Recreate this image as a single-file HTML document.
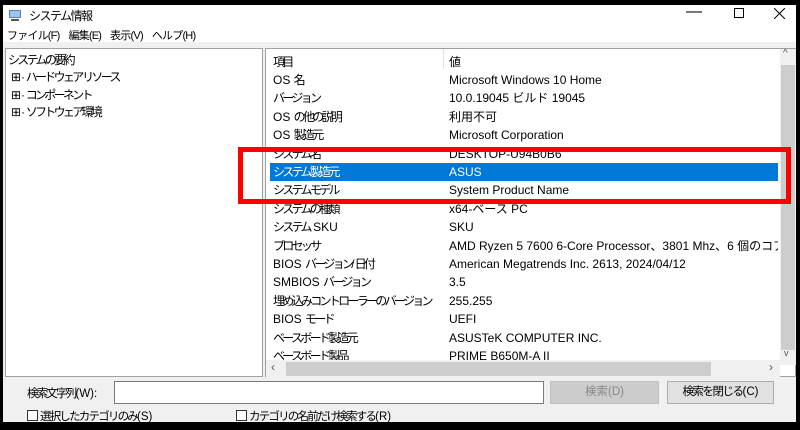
<!DOCTYPE html>
<html><head><meta charset="utf-8"><style>
*{margin:0;padding:0;box-sizing:border-box}
body{width:800px;height:430px;background:#000;position:relative;overflow:hidden;font-family:"Liberation Sans","Noto Sans CJK JP",sans-serif;font-size:12px;color:#000}
.win{position:absolute;left:3px;top:5px;width:793px;height:417px;background:#f0f0f0}
.a{position:absolute;white-space:nowrap}
.row{position:absolute;left:267px;width:508px;height:18px;line-height:18px;white-space:nowrap;overflow:hidden}
.row span{position:absolute;left:3px}
.row b{font-weight:normal;position:absolute;left:179px}
.j{letter-spacing:-2.7px}
i{font-style:normal;letter-spacing:0}
</style></head><body>
<div class="win">
<div class="a" style="left:0;top:0;width:793px;height:37px;background:#fff"></div>
<svg class="a" style="left:5px;top:3px" width="14" height="14"><rect x="1" y="2" width="12" height="8" fill="#5a7fb8"/><rect x="2" y="3" width="10" height="6" fill="#9cc4ee"/><rect x="3" y="11" width="8" height="2" fill="#555"/></svg>
<div class="a j" style="left:26px;top:2px;font-size:12px;letter-spacing:-1.5px">システム情報</div>
<div class="a" style="left:683px;top:-2px;font-size:16px">—</div>
<div class="a" style="left:731px;top:3px;width:10px;height:10px;border:1px solid #000"></div>
<svg class="a" style="left:771px;top:3px" width="11" height="11"><path d="M0 0L11 11M11 0L0 11" stroke="#000" stroke-width="1"/></svg>
<div class="a" style="left:4px;top:22px;font-size:11px;letter-spacing:-0.8px">ファイル(F)&nbsp;&nbsp;&nbsp;&nbsp;編集(E)&nbsp;&nbsp;&nbsp;&nbsp;表示(V)&nbsp;&nbsp;&nbsp;&nbsp;ヘルプ(H)</div>
<!-- left pane -->
<div class="a" style="left:2px;top:43px;width:258px;height:329px;background:#fff;border:1px solid #a0a0a0"></div>
<div class="a j" style="left:5px;top:46px;font-size:12px">システムの要約</div>
<div class="a j" style="left:8px;top:64px;font-size:12px;line-height:17.5px">
<div><i>⊞·</i> ハードウェア リソース</div><div><i>⊞·</i> コンポーネント</div><div><i>⊞·</i> ソフトウェア環境</div></div>
<!-- right pane -->
<div class="a" style="left:262px;top:43px;width:531px;height:329px;background:#fff;border:1px solid #a0a0a0"></div>
<div class="a j" style="left:270px;top:48px">項目</div>
<div class="a" style="left:440px;top:44px;width:1px;height:20px;background:#e0e0e0"></div>
<div class="a" style="left:446px;top:48px">値</div>
<div class="a" style="left:777px;top:44px;width:16px;height:316px;background:#f0f0f0"></div>
<div class="a" style="left:780px;top:43px;font-size:10px;color:#555">^</div>
<div class="a" style="left:778px;top:60px;width:14px;height:285px;background:#cdcdcd"></div>
<div class="a" style="left:781px;top:343px;font-size:9px;color:#555">v</div>
<div class="a" style="left:263px;top:355px;width:514px;height:17px;background:#f0f0f0"></div>
<div class="a" style="left:283px;top:357px;width:425px;height:14px;background:#cdcdcd"></div>
<div class="a" style="left:268px;top:355px;color:#555">‹</div>
<div class="a" style="left:766px;top:355px;color:#555">›</div>
<div class="row" style="top:66px"><span><i>OS </i><span class="j" style="position:static">名</span></span><b>Microsoft Windows 10 Home</b></div>
<div class="row" style="top:84.4px"><span class="j">バージョン</span><b>10.0.19045 ビルド 19045</b></div>
<div class="row" style="top:102.8px"><span class="j"><i>OS </i>の他の説明</span><b>利用不可</b></div>
<div class="row" style="top:121.2px"><span class="j"><i>OS </i>製造元</span><b>Microsoft Corporation</b></div>
<div class="row" style="top:139.6px"><span class="j">システム名</span><b>DESKTOP-U94B0B6</b></div>
<div class="row" style="top:158px;background:#0078d7;color:#fff"><span class="j">システム製造元</span><b>ASUS</b></div>
<div class="row" style="top:176.4px"><span class="j">システムモデル</span><b>System Product Name</b></div>
<div class="row" style="top:194.8px"><span class="j">システムの種類</span><b>x64-ベース PC</b></div>
<div class="row" style="top:213.2px"><span class="j">システム<i> SKU</i></span><b>SKU</b></div>
<div class="row" style="top:231.6px"><span class="j">プロセッサ</span><b>AMD Ryzen 5 7600 6-Core Processor、3801 Mhz、6 個のコア、12 個</b></div>
<div class="row" style="top:250px"><span class="j"><i>BIOS </i>バージョン<i>/</i>日付</span><b>American Megatrends Inc. 2613, 2024/04/12</b></div>
<div class="row" style="top:268.4px"><span class="j"><i>SMBIOS </i>バージョン</span><b>3.5</b></div>
<div class="row" style="top:286.8px"><span class="j">埋め込みコントローラーのバージョン</span><b>255.255</b></div>
<div class="row" style="top:305.2px"><span class="j"><i>BIOS </i>モード</span><b>UEFI</b></div>
<div class="row" style="top:323.6px"><span class="j">ベースボード製造元</span><b>ASUSTeK COMPUTER INC.</b></div>
<div class="row" style="top:342px;height:13px"><span class="j">ベースボード製品</span><b>PRIME B650M-A II</b></div>
<!-- red box -->
<div class="a" style="left:235px;top:142px;width:553px;height:57px;border:5px solid #f00"></div>
<!-- bottom -->
<div class="a" style="left:24px;top:380px;font-size:11.5px;letter-spacing:-1.8px">検索文字列<i>(W):</i></div>
<div class="a" style="left:111px;top:376px;width:430px;height:23px;background:#fff;border:1px solid #7a7a7a"></div>
<div class="a" style="left:547px;top:376px;width:109px;height:23px;background:#ccc;border:1px solid #bfbfbf;color:#888;text-align:center;line-height:21px;font-size:11.5px">検索(D)</div>
<div class="a" style="left:664px;top:376px;width:107px;height:23px;background:#e1e1e1;border:1px solid #adadad;text-align:center;line-height:21px;font-size:11.5px;letter-spacing:-1.5px">検索を閉じる<i>(C)</i></div>
<div class="a" style="left:24px;top:405px;width:11px;height:11px;background:#fff;border:1px solid #333"></div>
<div class="a" style="left:37px;top:403px;font-size:11.5px;letter-spacing:-1.8px">選択したカテゴリのみ<i>(S)</i></div>
<div class="a" style="left:233px;top:405px;width:11px;height:11px;background:#fff;border:1px solid #333"></div>
<div class="a" style="left:246px;top:403px;font-size:11.5px;letter-spacing:-1.8px">カテゴリの名前だけ検索する<i>(R)</i></div>
</div>
</body></html>
